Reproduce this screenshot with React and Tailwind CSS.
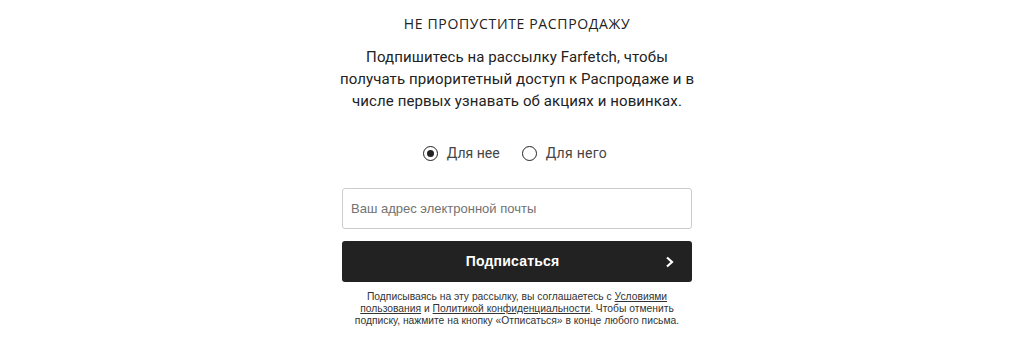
import React, { useState } from 'react';

export default function App() {
    const [gender, setGender] = useState('her');

    return (
        <div className="w-full h-[341px] bg-white flex justify-center pl-[10px]">
            <div className="w-[350px] flex flex-col items-center pt-[15px] text-[#222222] font-['Open_Sans',sans-serif]">
                <h2 className="h-[18px] text-[14px] leading-[18px] tracking-[0.65px] font-normal">НЕ ПРОПУСТИТЕ РАСПРОДАЖУ</h2>
                <p className="mt-[13px] w-[380px] px-[10px] text-center text-[15px] leading-[22px] font-['Roboto',sans-serif] tracking-[0.1px]">
                    Подпишитесь на рассылку Farfetch, чтобы получать приоритетный доступ к Распродаже и в числе первых узнавать об акциях и новинках.
                </p>

                {/* gender radios */}
                <div className="mt-[32px] h-[18px] flex items-center gap-[22px] pr-[4px] font-['Roboto',sans-serif] text-[14px] text-[#444]">
                    <label className="flex items-center gap-[9px] cursor-pointer" onClick={() => setGender('her')}>
                        <span className="w-[15px] h-[15px] rounded-full border border-[#222] flex items-center justify-center">
                            {gender === 'her' && <span className="w-[7px] h-[7px] rounded-full bg-[#222]" />}
                        </span>
                        <span>Для нее</span>
                    </label>
                    <label className="flex items-center gap-[9px] cursor-pointer" onClick={() => setGender('him')}>
                        <span className="w-[15px] h-[15px] rounded-full border border-[#222] flex items-center justify-center">
                            {gender === 'him' && <span className="w-[7px] h-[7px] rounded-full bg-[#222]" />}
                        </span>
                        <span className="tracking-[0.3px]">Для него</span>
                    </label>
                </div>

                <input
                    type="email"
                    placeholder="Ваш адрес электронной почты"
                    className="mt-[26px] w-full h-[41px] px-[8px] border border-[#cccccc] rounded-[3px] text-[13px] font-['Liberation_Sans',sans-serif] placeholder:text-[#727272] outline-none"
                />

                <button className="mt-[12px] w-full h-[41px] pr-[9px] bg-[#222222] rounded-[3px] relative flex items-center justify-center text-white font-['Liberation_Sans',sans-serif] font-bold text-[14px] tracking-[0.2px]">
                    Подписаться
                    <svg className="absolute right-[17px] top-1/2 -translate-y-1/2" width="10" height="12" viewBox="0 0 10 12" fill="none">
                        <path d="M2 1.5L7 6L2 10.5" stroke="white" strokeWidth="2.2" />
                    </svg>
                </button>

                <p className="mt-[9px] w-[336px] text-center text-[10.3px] leading-[12px] text-[#333] font-['Liberation_Sans',sans-serif]">
                    Подписываясь на эту рассылку, вы соглашаетесь с <a className="underline" href="#">Условиями пользования</a> и <a className="underline" href="#">Политикой конфиденциальности</a>. Чтобы отменить подписку, нажмите на кнопку «Отписаться» в конце любого письма.
                </p>
            </div>
        </div>
    );
}
